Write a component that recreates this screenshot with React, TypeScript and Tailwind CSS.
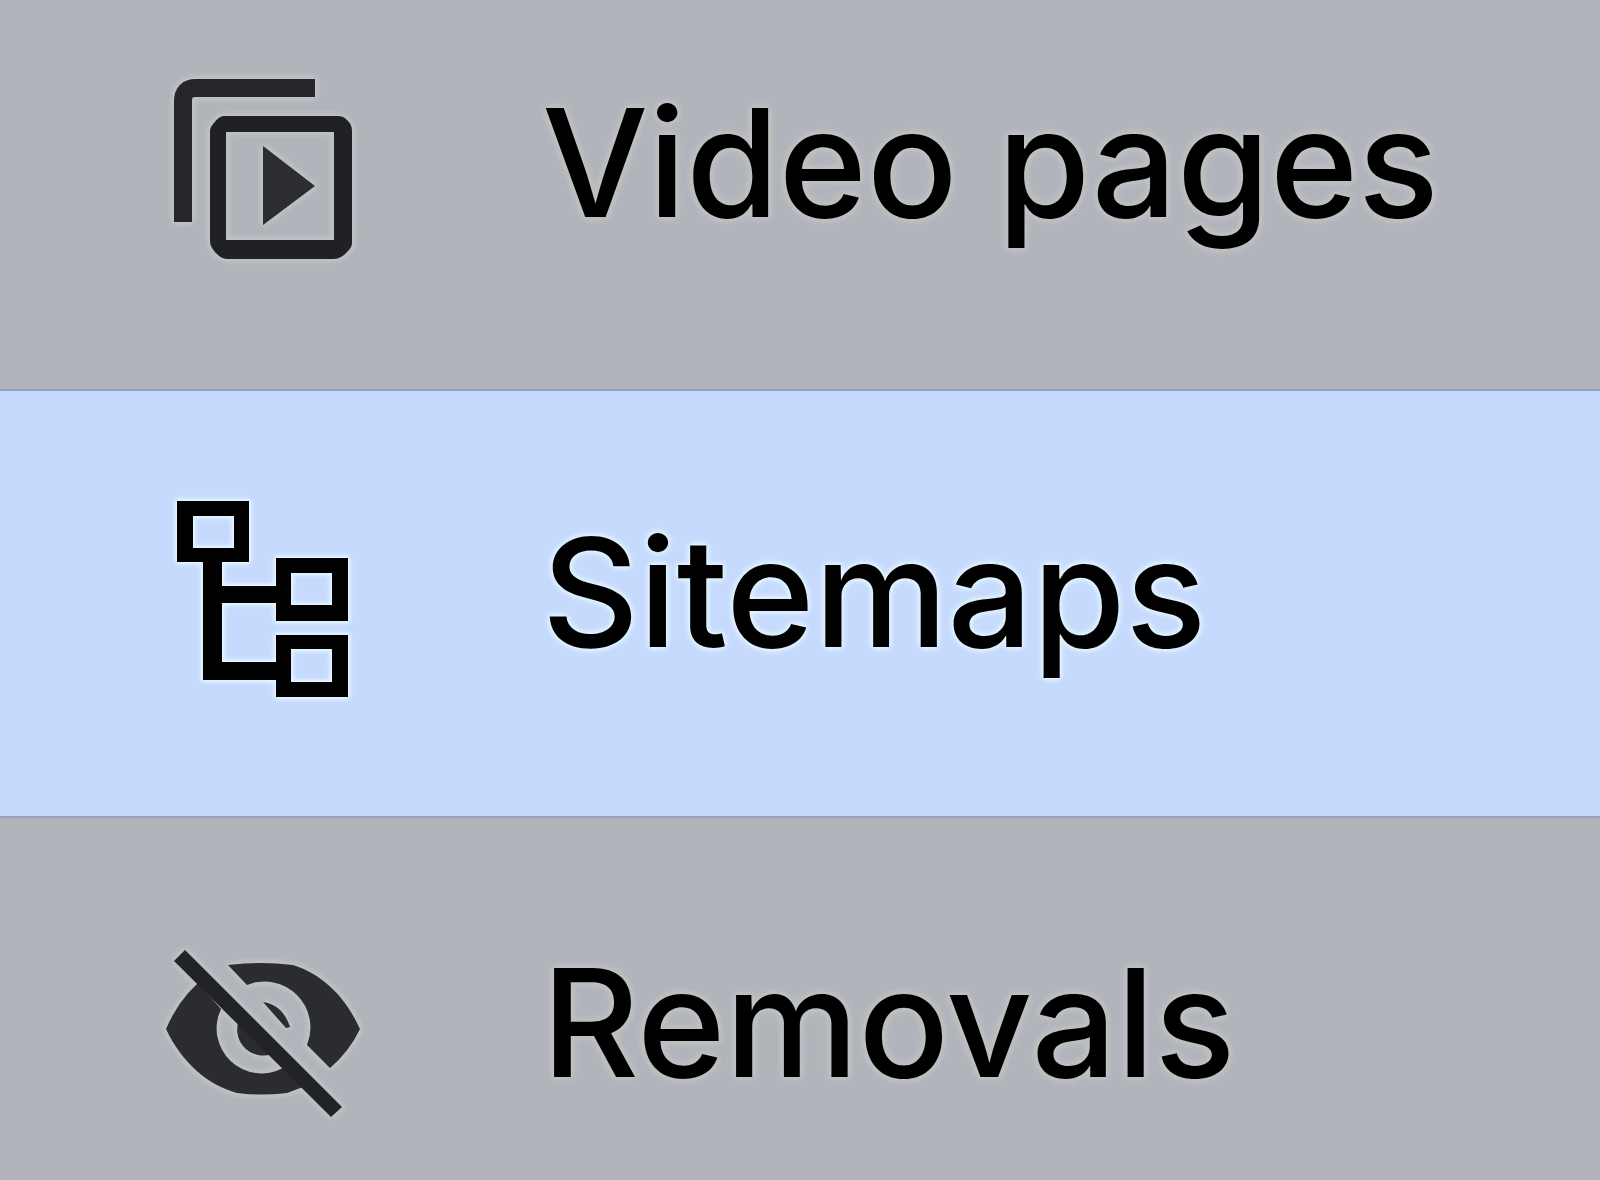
import React from 'react';
import clsx from 'clsx';

interface NavItem {
  label: string;
  icon: React.ReactNode;
  active?: boolean;
  spacing: string;
}

const VideoPagesIcon: React.FC = () => (
  <svg viewBox="0 0 216 216" className="size-full" aria-hidden="true">
    <path d="M27 167V46Q27 33 40 33H159" fill="none" stroke="#24262a" strokeWidth="18" />
    <path
      fill="#1f2125"
      fillRule="evenodd"
      d="M68 61H182Q187 61 190 64Q196 69 196 76V188Q196 192 192 196Q185 204 178 204H72Q66 204 62 200Q54 193 54 186V76Q54 72 58 68Q63 61 68 61ZM70 77V185H178V77Z"
    />
    <path d="M107 91L159 131L107 170Z" fill="#2c2d31" />
  </svg>
);

const SitemapsIcon: React.FC = () => (
  <svg viewBox="0 0 216 216" className="size-full" aria-hidden="true">
    <path
      fill="#000"
      fillRule="evenodd"
      d="M21 16H93V77H66V101H120V73H192V136H120V118H66V177H120V150H192V212H120V195H47V77H21ZM37 31V63H78V31ZM135 88V120H176V88ZM135 164V197H176V164Z"
    />
  </svg>
);

const RemovalsIcon: React.FC = () => (
  <svg viewBox="0 0 216 216" className="size-full" aria-hidden="true">
    <g fill="#2b2c30">
      <path d="M72 50Q104 46 137 50C168 60 190 83 204 114Q193 137 174 153L151 130A46 46 0 0 0 91 70Z" />
      <path d="M42 68Q22 86 10 114C26 148 52 170 81 178Q104 181 131 178L147 172L127 153A45 45 0 0 1 65 94Z" />
      <path d="M82 108A26 26 0 0 0 116 139Z" />
      <path d="M107 87Q127 90 134 112L130 113Z" />
      <path d="M29 35L186 192L175 202L18 46Z" fill="#222327" />
    </g>
  </svg>
);

const items: NavItem[] = [
  { label: 'Video pages', icon: <VideoPagesIcon />, spacing: 'pt-[55px] pb-[118px]' },
  { label: 'Sitemaps', icon: <SitemapsIcon />, active: true, spacing: 'pt-[94px] pb-[115px]' },
  { label: 'Removals', icon: <RemovalsIcon />, spacing: 'pt-[97px] pb-[49px]' },
];

const App: React.FC = () => {
  return (
    <nav className="min-h-screen bg-[#b1b4bb] font-['Inter',sans-serif]" aria-label="Indexing">
      <ul>
        {items.map((item) => (
          <li key={item.label}>
            <a
              href="#"
              aria-current={item.active ? 'page' : undefined}
              className={clsx(
                'flex items-center gap-[170px] pl-[156px] text-black',
                item.spacing,
                item.active && 'border-y-2 border-[#96a3ba] bg-[#c6dafd]'
              )}
            >
              <span
                className={clsx(
                  'size-[216px] shrink-0',
                  item.active
                    ? '[filter:drop-shadow(0_0_2px_#e2f4ff)_drop-shadow(0_0_2px_#e2f4ff)_drop-shadow(0_0_1px_#e2f4ff)]'
                    : '[filter:drop-shadow(0_0_3px_#bfc1c2)_drop-shadow(0_0_2px_#bfc1c2)_drop-shadow(0_0_1px_#bfc1c2)]'
                )}
              >
                {item.icon}
              </span>
              <span
                className={clsx(
                  'text-[150px] leading-[160px] font-medium whitespace-nowrap',
                  item.active
                    ? '[text-shadow:0_0_5px_#e2f4ff,0_0_5px_#e2f4ff,0_0_6px_#e2f4ff,0_0_8px_#d8ebff]'
                    : '[text-shadow:0_0_6px_#bfc1c2,0_0_6px_#bfc1c2,0_0_8px_#bfc1c2,0_0_8px_#bfc1c2,0_0_8px_#bfc1c2]'
                )}
              >
                {item.label}
              </span>
            </a>
          </li>
        ))}
      </ul>
    </nav>
  );
};

export default App;
